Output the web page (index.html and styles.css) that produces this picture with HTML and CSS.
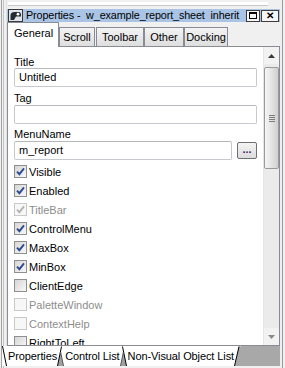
FILE: index.html
```html
<!DOCTYPE html>
<html>
<head>
<meta charset="utf-8">
<link rel="stylesheet" href="styles.css">
</head>
<body>
<div class="shell">
  <div class="gutter-l"></div>
  <div class="win">
    <div class="topstrip"><div class="topbar"></div></div>
    <div class="titlebar">
      <svg class="appicon" width="16" height="13" viewBox="0 0 16 13">
        <rect x="0.5" y="0.5" width="14" height="12" fill="#dfe3ea" stroke="#3a3a3a"/>
        <path d="M2.5 11 L2.5 6.5 Q2.5 3 6.5 3 L11 3 Q13 3 13 5.5 L13 7.5 L8 7.5 L6 11 Z" fill="#262a33"/>
        <circle cx="10" cy="5.2" r="1.4" fill="#ffffff"/>
      </svg>
      <span class="title">Properties -  w_example_report_sheet  inherit</span>
      <span class="tbtn max"><span class="sq"></span></span>
      <span class="tbtn close">✕</span>
    </div>
    <div class="tabs">
      <div class="tab active">General</div>
      <div class="tab t-scroll">Scroll</div>
      <div class="tab t-toolbar">Toolbar</div>
      <div class="tab t-other">Other</div>
      <div class="tab t-docking">Docking</div>
    </div>
    <div class="panel">
      <div class="form">
        <div class="lbl">Title</div>
        <div class="inp">Untitled</div>
        <div class="lbl mt5">Tag</div>
        <div class="inp"></div>
        <div class="lbl mt4">MenuName</div>
        <div class="row-inp">
          <div class="inp grow">m_report</div>
          <div class="dots"><span class="d1">.</span><span class="d2">.</span><span class="d3">.</span></div>
        </div>
        <div class="checks">
          <div class="ck"><span class="cb"><svg viewBox="0 0 11 11"><path d="M2 5.6 L4.4 8.2 L9 2.4"/></svg></span><span>Visible</span></div>
          <div class="ck"><span class="cb"><svg viewBox="0 0 11 11"><path d="M2 5.6 L4.4 8.2 L9 2.4"/></svg></span><span>Enabled</span></div>
          <div class="ck dis"><span class="cb"><svg viewBox="0 0 11 11"><path d="M2 5.6 L4.4 8.2 L9 2.4"/></svg></span><span>TitleBar</span></div>
          <div class="ck"><span class="cb"><svg viewBox="0 0 11 11"><path d="M2 5.6 L4.4 8.2 L9 2.4"/></svg></span><span>ControlMenu</span></div>
          <div class="ck"><span class="cb"><svg viewBox="0 0 11 11"><path d="M2 5.6 L4.4 8.2 L9 2.4"/></svg></span><span>MaxBox</span></div>
          <div class="ck"><span class="cb"><svg viewBox="0 0 11 11"><path d="M2 5.6 L4.4 8.2 L9 2.4"/></svg></span><span>MinBox</span></div>
          <div class="ck"><span class="cb"></span><span>ClientEdge</span></div>
          <div class="ck dis"><span class="cb"></span><span>PaletteWindow</span></div>
          <div class="ck dis"><span class="cb"></span><span>ContextHelp</span></div>
          <div class="ck"><span class="cb"></span><span>RightToLeft</span></div>
        </div>
      </div>
      <div class="scrollbar">
        <div class="sbtn"><svg width="7" height="4" viewBox="0 0 7 4"><path d="M0 4 L3.5 0 L7 4 Z" fill="#3a3a3a"/></svg></div>
        <div class="thumb"><div class="grip"></div></div>
        <div class="track"></div>
        <div class="sbtn"><svg width="7" height="4" viewBox="0 0 7 4"><path d="M0 0 L3.5 4 L7 0 Z" fill="#8a8a8a"/></svg></div>
      </div>
    </div>
    <div class="sheettabs">
      <svg class="edge" width="5" height="20" viewBox="0 0 5 20"><path d="M0.5 0 L4.5 20" stroke="#000" fill="none"/></svg>
      <span class="stab">Properties</span>
      <svg class="sep" width="7" height="20" viewBox="0 0 7 20"><path d="M0.5 20 L3.5 6 L6.5 20 Z" fill="#a0a0a0"/><path d="M0.5 20 L4.5 0.5" stroke="#000" fill="none"/><path d="M3.6 6 L6.5 20" stroke="#555" fill="none"/></svg>
      <span class="stab">Control List</span>
      <svg class="sep" width="7" height="20" viewBox="0 0 7 20"><path d="M0.5 20 L3.5 6 L6.5 20 Z" fill="#a0a0a0"/><path d="M2.5 0.5 L6.5 20" stroke="#000" fill="none"/><path d="M0.5 20 L3.4 6" stroke="#555" fill="none"/></svg>
      <span class="stab">Non-Visual Object List</span>
      <svg class="edge" width="7" height="20" viewBox="0 0 7 20"><path d="M0.5 20 L5 0.5 L7 0.5 L7 20 Z" fill="#a8a8a8"/><path d="M0.5 20 L5 0.5" stroke="#000" fill="none"/></svg>
      <div class="sfill"></div>
    </div>
  </div>
  <div class="gutter-r"></div>
</div>
</body>
</html>
```

FILE: styles.css
```css
html, body {
  margin: 0;
  padding: 0;
}
body {
  width: 285px;
  height: 368px;
  overflow: hidden;
  background: #f0f0f0;
  font-family: "Liberation Sans", Arial, sans-serif;
  font-size: 11px;
  color: #000;
}
.shell {
  display: flex;
  height: 368px;
}
.gutter-l {
  width: 7px;
  flex: none;
  background: linear-gradient(to right, #f0f0f0 0 1px, #a3a3a3 1px 2px, #f0f0f0 2px 3px, #c4c4c4 3px 4px, #f0f0f0 4px 6px, #e2e2e2 6px 7px);
}
.gutter-r {
  width: 5px;
  flex: none;
  background: linear-gradient(to right, #f0f0f0 0 2px, #9c9c9c 2px 3px, #f0f0f0 3px);
}
.win {
  width: 273px;
  flex: none;
  display: flex;
  flex-direction: column;
}
.win > * { flex: none; }
.topstrip {
  height: 9px;
  box-sizing: border-box;
  padding: 2px 12px 0 1px;
}
.topbar {
  height: 3px;
  background: #fff;
  border-bottom: 1px solid #c8c8c8;
}
.titlebar {
  height: 13px;
  background: #a9c4e5;
  display: flex;
  align-items: center;
  padding-left: 1px;
}
.appicon {
  flex: none;
  display: block;
}
.title {
  flex: 1;
  margin-left: 2px;
  white-space: pre;
  overflow: hidden;
  line-height: 13px;
  font-size: 10.8px;
  letter-spacing: -0.12px;
}
.tbtn {
  flex: none;
  box-sizing: border-box;
  height: 12px;
  border: 1px solid #3c3c3c;
  background: #f6f6f6;
  display: flex;
  align-items: center;
  justify-content: center;
}
.max {
  width: 14px;
  margin-right: 1px;
}
.sq {
  width: 8px;
  height: 7px;
  box-sizing: border-box;
  border: 1px solid #000;
  border-top-width: 2px;
}
.close {
  width: 18px;
  margin-right: 1px;
  font-size: 10px;
  font-weight: bold;
  line-height: 10px;
}
.tabs {
  height: 24px;
  display: flex;
  align-items: flex-end;
}
.tab {
  box-sizing: border-box;
  height: 19px;
  border: 1px solid #898c95;
  border-bottom: none;
  background: linear-gradient(#f3f3f3, #dedede);
  line-height: 13px;
  padding-top: 3px;
  text-align: center;
  flex: none;
}
.tab.active {
  height: 25px;
  width: 52px;
  background: #fff;
  margin-bottom: -1px;
  position: relative;
  z-index: 1;
  padding-top: 4px;
  padding-left: 6px;
  text-align: left;
}
.t-scroll { width: 36px; }
.t-toolbar { width: 48px; margin-left: 1px; }
.t-other { width: 40px; }
.t-docking { width: 44px; }
.panel {
  height: 300px;
  box-sizing: border-box;
  border: 1px solid #898c95;
  background: #fff;
  display: flex;
  overflow: hidden;
}
.form {
  width: 255px;
  flex: none;
  box-sizing: border-box;
  padding: 9px 6px 0 6px;
  display: flex;
  flex-direction: column;
}
.form > * { flex: none; }
.lbl {
  height: 12px;
  line-height: 12px;
}
.mt5 { margin-top: 5px; }
.mt4 { margin-top: 4px; }
.inp {
  height: 19px;
  box-sizing: border-box;
  border: 1px solid #c6c9d0;
  border-top-color: #b5b8bf;
  border-radius: 2px;
  padding-left: 4px;
  line-height: 17px;
}
.mt5 + .inp, .mt4 + .row-inp { margin-top: 1px; }
.row-inp {
  display: flex;
  align-items: center;
  gap: 5px;
}
.grow { flex: 1; }
.dots {
  width: 20px;
  height: 17px;
  box-sizing: border-box;
  border: 1px solid #707070;
  border-radius: 2px;
  background: linear-gradient(#f4f4f4, #dcdcdc);
  display: flex;
  justify-content: center;
  align-items: flex-end;
  font-weight: bold;
  font-size: 11px;
  line-height: 11px;
  padding-bottom: 3px;
  flex: none;
}
.d1 { color: #1c2a7a; }
.d2 { color: #7a1c4a; }
.d3 { color: #1c2a7a; }
.checks {
  margin-top: 2px;
  display: flex;
  flex-direction: column;
}
.ck {
  height: 19px;
  display: flex;
  align-items: center;
  flex: none;
}
.cb {
  width: 13px;
  height: 13px;
  box-sizing: border-box;
  border: 1px solid #8e8f8f;
  background: linear-gradient(135deg, #d6d6d6, #f8f8f8);
  display: flex;
  align-items: center;
  justify-content: center;
  margin-right: 2px;
  flex: none;
}
.cb svg {
  width: 11px;
  height: 11px;
  display: block;
}
.cb path {
  fill: none;
  stroke: #2e4b8f;
  stroke-width: 1.9;
}
.ck.dis { color: #8d8d8d; }
.ck.dis .cb {
  border-color: #c9c9c9;
  background: #f7f7f7;
}
.ck.dis .cb path { stroke: #b4b4b4; }
.scrollbar {
  width: 16px;
  flex: none;
  display: flex;
  flex-direction: column;
  background: #ebebeb;
  border-left: 1px solid #e6e6e6;
  box-sizing: border-box;
}
.sbtn {
  height: 17px;
  flex: none;
  background: #f2f2f2;
  display: flex;
  align-items: center;
  justify-content: center;
}
.thumb {
  height: 102px;
  flex: none;
  margin-top: 3px;
  box-sizing: border-box;
  border: 1px solid #9a9a9a;
  border-radius: 2px;
  background: linear-gradient(to right, #f6f6f6, #e4e4e4 50%, #cfcfcf);
  display: flex;
  align-items: center;
  justify-content: center;
}
.grip {
  width: 6px;
  height: 7px;
  background: repeating-linear-gradient(#7a7a7a 0 1px, transparent 1px 2px);
}
.track { flex: 1; }
.sheettabs {
  height: 20px;
  margin-left: -5px;
  display: flex;
  align-items: stretch;
  background: #fff;
  position: relative;
  z-index: 1;
}
.sheettabs svg {
  display: block;
  flex: none;
}
.stab {
  line-height: 20px;
  white-space: nowrap;
  padding-left: 1px;
  letter-spacing: -0.1px;
}
.sfill {
  flex: 1;
  background: #a8a8a8;
}
```
